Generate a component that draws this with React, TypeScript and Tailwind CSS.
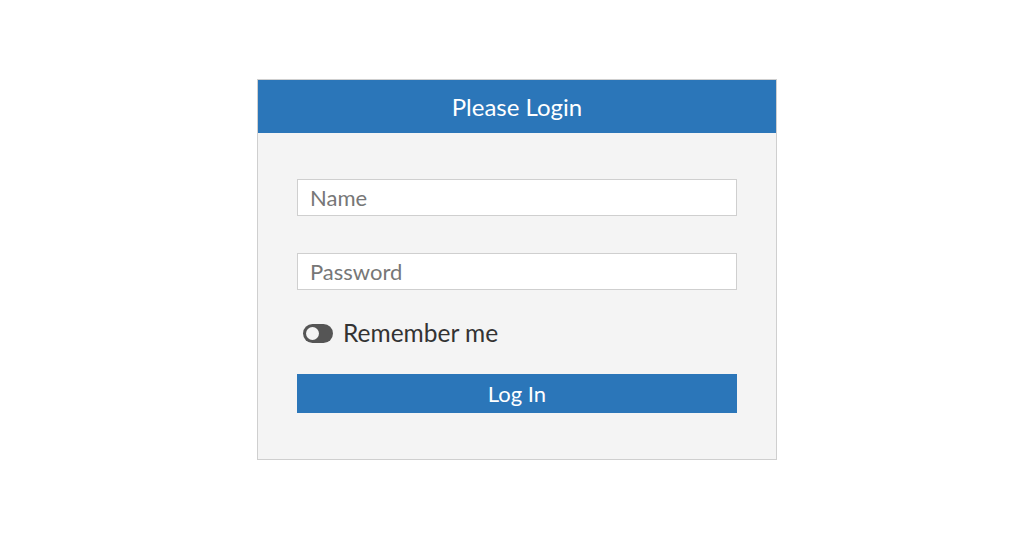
export default function App() {
  return (
    <div className="w-full h-[534px] bg-white flex justify-center pl-[24px] pt-[79px] font-['Lato',sans-serif]">
      <div className="w-[520px] h-[381px] border border-[#cfcfcf] bg-[#f4f4f4] flex flex-col">
        <div className="h-[53px] bg-[#2b76b9] flex items-center justify-center text-white text-[24px]">
          Please Login
        </div>
        <div className="flex flex-col px-[39px] pt-[46px]">
          <input
            placeholder="Name"
            className="h-[37px] bg-white border border-[#cfcfcf] px-3 text-[22px] text-[#333] placeholder:text-[#777] outline-none"
          />
          <input
            type="password"
            placeholder="Password"
            className="mt-[37px] h-[37px] bg-white border border-[#cfcfcf] px-3 text-[22px] text-[#333] placeholder:text-[#777] outline-none"
          />
          <label className="mt-[30px] flex items-center gap-[10px] pl-[6px] text-[24.5px] text-[#333] h-[26px]">
            <span className="w-[30px] h-[19px] rounded-full bg-[#555] flex items-center pl-[3px]">
              <span className="w-[13px] h-[13px] rounded-full bg-[#f4f4f4]" />
            </span>
            Remember me
          </label>
          <button className="mt-[28px] h-[39px] bg-[#2b76b9] text-white text-[22px]">
            Log In
          </button>
        </div>
      </div>
    </div>
  );
}
